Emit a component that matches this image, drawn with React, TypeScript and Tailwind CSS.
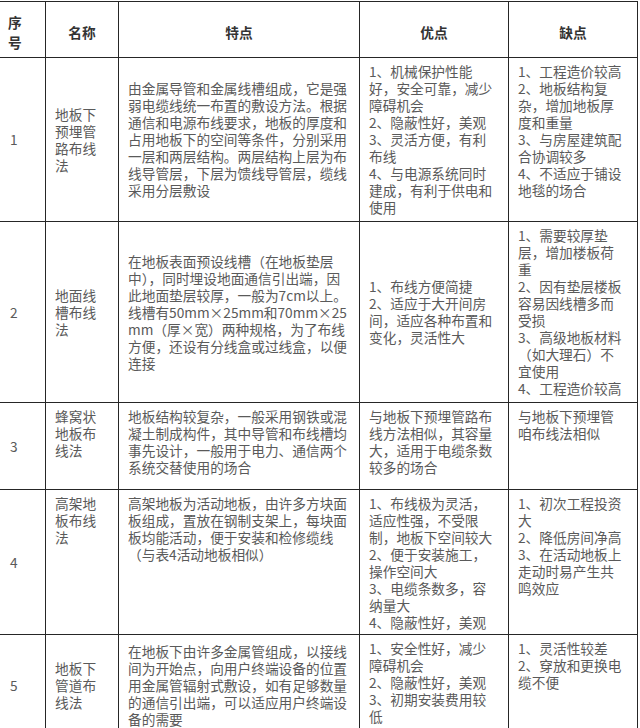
import { Fragment } from 'react';

type Cell = { lines: string[]; mid?: boolean };

type Row = {
  height: string;
  no: string;
  name: Cell;
  feature: Cell;
  pro: Cell;
  con: Cell;
};

const rows: Row[] = [
  {
    height: 'h-[164px]',
    no: '1',
    name: { lines: ['地板下', '预埋管', '路布线', '法'], mid: true },
    feature: {
      lines: [
        '由金属导管和金属线槽组成，它是强',
        '弱电缆线统一布置的敷设方法。根据',
        '通信和电源布线要求，地板的厚度和',
        '占用地板下的空间等条件，分别采用',
        '一层和两层结构。两层结构上层为布',
        '线导管层，下层为馈线导管层，缆线',
        '采用分层敷设',
      ],
      mid: true,
    },
    pro: {
      lines: [
        '1、机械保护性能',
        '好，安全可靠，减少',
        '障碍机会',
        '2、隐蔽性好，美观',
        '3、灵活方便，有利',
        '布线',
        '4、与电源系统同时',
        '建成，有利于供电和',
        '使用',
      ],
      mid: true,
    },
    con: {
      lines: [
        '1、工程造价较高',
        '2、地板结构复',
        '杂，增加地板厚',
        '度和重量',
        '3、与房屋建筑配',
        '合协调较多',
        '4、不适应于铺设',
        '地毯的场合',
      ],
    },
  },
  {
    height: 'h-[181px]',
    no: '2',
    name: { lines: ['地面线', '槽布线', '法'], mid: true },
    feature: {
      lines: [
        '在地板表面预设线槽（在地板垫层',
        '中），同时埋设地面通信引出端，因',
        '此地面垫层较厚，一般为7cm以上。',
        '线槽有50mm×25mm和70mm×25',
        'mm（厚×宽）两种规格，为了布线',
        '方便，还设有分线盒或过线盒，以便',
        '连接',
      ],
      mid: true,
    },
    pro: {
      lines: ['1、布线方便简捷', '2、适应于大开间房', '间，适应各种布置和', '变化，灵活性大'],
      mid: true,
    },
    con: {
      lines: [
        '1、需要较厚垫',
        '层，增加楼板荷',
        '重',
        '2、因有垫层楼板',
        '容易因线槽多而',
        '受损',
        '3、高级地板材料',
        '（如大理石）不',
        '宜使用',
        '4、工程造价较高',
      ],
      mid: true,
    },
  },
  {
    height: 'h-[87px]',
    no: '3',
    name: { lines: ['蜂窝状', '地板布', '线法'] },
    feature: {
      lines: [
        '地板结构较复杂，一般采用钢铁或混',
        '凝土制成构件，其中导管和布线槽均',
        '事先设计，一般用于电力、通信两个',
        '系统交替使用的场合',
      ],
    },
    pro: { lines: ['与地板下预埋管路布', '线方法相似，其容量', '大，适用于电缆条数', '较多的场合'] },
    con: { lines: ['与地板下预埋管', '咱布线法相似'] },
  },
  {
    height: 'h-[145px]',
    no: '4',
    name: { lines: ['高架地', '板布线', '法'] },
    feature: {
      lines: [
        '高架地板为活动地板，由许多方块面',
        '板组成，置放在钢制支架上，每块面',
        '板均能活动，便于安装和检修缆线',
        '（与表4活动地板相似）',
      ],
    },
    pro: {
      lines: [
        '1、布线极为灵活，',
        '适应性强，不受限',
        '制，地板下空间较大',
        '2、便于安装施工，',
        '操作空间大',
        '3、电缆条数多，容',
        '纳量大',
        '4、隐蔽性好，美观',
      ],
    },
    con: {
      lines: ['1、初次工程投资', '大', '2、降低房间净高', '3、在活动地板上', '走动时易产生共', '鸣效应'],
    },
  },
  {
    height: 'h-[102px]',
    no: '5',
    name: { lines: ['地板下', '管道布', '线法'], mid: true },
    feature: {
      lines: [
        '在地板下由许多金属管组成，以接线',
        '间为开始点，向用户终端设备的位置',
        '用金属管辐射式敷设，如有足够数量',
        '的通信引出端，可以适应用户终端设',
        '备的需要',
      ],
      mid: true,
    },
    pro: { lines: ['1、安全性好，减少', '障碍机会', '2、隐蔽性好，美观', '3、初期安装费用较', '低'] },
    con: { lines: ['1、灵活性较差', '2、穿放和更换电', '缆不便'] },
  },
];

const cols = 'grid grid-cols-[46px_73px_241px_149px_129px]';
const edge = 'border-r border-b border-[#262626]';

function TextCell({ cell }: { cell: Cell }) {
  return (
    <div className={`${edge} flex pl-[9px] ${cell.mid ? 'items-center' : 'items-start pt-[5px]'}`}>
      <p className="whitespace-nowrap">
        {cell.lines.map((line, i) => (
          <Fragment key={i}>
            {i > 0 && <br />}
            {line}
          </Fragment>
        ))}
      </p>
    </div>
  );
}

export default function App() {
  return (
    <div className="w-[640px] h-[728px] overflow-hidden bg-white">
      <div
        className="mt-px w-[638px] border-t border-[#262626] text-[13.7px] leading-[17px] text-[#5a5a5a]"
        style={{ fontFamily: '"Noto Sans CJK SC", "Noto Sans", sans-serif' }}
      >
        {/* Header */}
        <div className={`${cols} h-[56px] font-bold text-[#333] leading-[20px]`}>
          <div className={`${edge} flex items-center pl-[8px] pt-[4px]`}>
            <p>
              序<br />号
            </p>
          </div>
          <div className={`${edge} flex items-center justify-center pt-[4px]`}>名称</div>
          <div className={`${edge} flex items-center justify-center pt-[4px]`}>特点</div>
          <div className={`${edge} flex items-center justify-center pt-[4px]`}>优点</div>
          <div className={`${edge} flex items-center justify-center pt-[4px]`}>缺点</div>
        </div>

        {/* Body rows */}
        {rows.map((row) => (
          <div key={row.no} className={`${cols} ${row.height}`}>
            <div className={`${edge} flex items-center pl-[10px]`}>{row.no}</div>
            <TextCell cell={row.name} />
            <TextCell cell={row.feature} />
            <TextCell cell={row.pro} />
            <TextCell cell={row.con} />
          </div>
        ))}
      </div>
    </div>
  );
}
